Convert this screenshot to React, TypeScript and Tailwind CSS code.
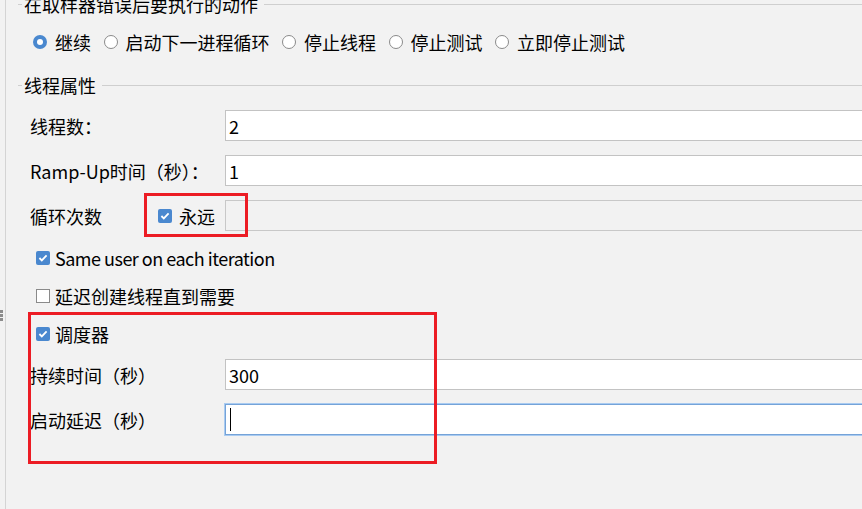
import React from "react";

function Radio({ checked }: { checked?: boolean }) {
  if (checked) {
    return (
      <span className="w-[14px] h-[14px] rounded-full bg-[#4a88cf] flex items-center justify-center shrink-0">
        <span className="w-[6px] h-[6px] rounded-full bg-white" />
      </span>
    );
  }
  return <span className="w-[14px] h-[14px] rounded-full bg-white border border-[#8a8a8a] shrink-0" />;
}

function Check({ checked }: { checked?: boolean }) {
  if (checked) {
    return (
      <span className="w-[14px] h-[14px] rounded-[2px] bg-[#4a88cf] flex items-center justify-center shrink-0">
        <svg width="12" height="12" viewBox="0 0 12 12">
          <path d="M2.4 6 L4.8 8.4 L9.6 3.4" fill="none" stroke="white" strokeWidth="1.8" />
        </svg>
      </span>
    );
  }
  return <span className="w-[14px] h-[14px] bg-white border border-[#8a8a8a] shrink-0" />;
}

function Title({ text, cls }: { text: string; cls: string }) {
  return (
    <div className={"h-[24px] flex items-center " + cls}>
      <span className="ml-[12px] w-[4px] h-px bg-[#cfcfcf]" />
      <span className="ml-[2px] whitespace-nowrap">{text}</span>
      <span className="ml-[6px] flex-1 h-px bg-[#cfcfcf]" />
    </div>
  );
}

function Field({ label, value, cls }: { label: string; value: string; cls: string }) {
  return (
    <div className={"h-[31px] flex items-center " + cls}>
      <span className="w-[195px] shrink-0 whitespace-nowrap">{label}</span>
      <div className="flex-1 mr-[-6px] h-full bg-white border border-[#c3c3c3] pl-[3px] flex items-center">{value}</div>
    </div>
  );
}

function CheckRow({ checked, label, cls, tcls }: { checked?: boolean; label: string; cls: string; tcls?: string }) {
  return (
    <div className={"h-[25px] flex items-center pl-[6px] " + cls}>
      <Check checked={checked} />
      <span className={"ml-[5px] whitespace-nowrap " + (tcls || "")}>{label}</span>
    </div>
  );
}

export default function App() {
  const radios = ["继续", "启动下一进程循环", "停止线程", "停止测试", "立即停止测试"];
  return (
    <div className="relative w-[862px] h-[509px] overflow-hidden bg-[#f2f2f2] flex text-[18px] leading-[24px] text-black font-['Noto_Sans_CJK_SC',sans-serif]">
      <div className="w-[6px] shrink-0 border-r border-[#d4d4d4] flex flex-col pt-[310px] gap-[1px]">
        <span className="w-[3px] h-[3px] bg-[#8c8c8c]" />
        <span className="w-[3px] h-[3px] bg-[#8c8c8c]" />
        <span className="w-[3px] h-[3px] bg-[#8c8c8c]" />
      </div>
      <div className="flex-1 flex flex-col min-w-0">
        <Title text="在取样器错误后要执行的动作" cls="mt-[-8px]" />
        <div className="h-[52px] flex items-center pl-[27px] gap-[12.5px]">
          {radios.map((r, i) => (
            <div key={r} className="flex items-center gap-[8px]">
              <Radio checked={i === 0} />
              <span className="whitespace-nowrap">{r}</span>
            </div>
          ))}
        </div>
        <Title text="线程属性" cls="mt-[5px]" />
        <div className="mt-[13px] flex flex-col pl-[24px]">
          <Field label="线程数：" value="2" cls="" />
          <Field label="Ramp-Up时间（秒）：" value="1" cls="mt-[14px]" />
          <div className="h-[31px] mt-[14px] flex items-center">
            <div className="w-[195px] shrink-0 flex items-center">
              <span className="w-[128px] shrink-0 whitespace-nowrap">循环次数</span>
              <Check checked />
              <span className="ml-[7px] whitespace-nowrap">永远</span>
            </div>
            <div className="flex-1 mr-[-6px] h-full border border-[#c8c8c8] bg-[#f2f2f2]" />
          </div>
          <CheckRow checked label="Same user on each iteration" cls="mt-[14px]" tcls="tracking-[-0.5px]" />
          <CheckRow label="延迟创建线程直到需要" cls="mt-[13px]" />
          <CheckRow checked label="调度器" cls="mt-[13px]" />
          <Field label="持续时间（秒）" value="300" cls="mt-[13px]" />
          <div className="h-[31px] mt-[14px] flex items-center">
            <span className="w-[195px] shrink-0 whitespace-nowrap">启动延迟（秒）</span>
            <div className="flex-1 mr-[-6px] h-full bg-white border border-[#75a3d8] shadow-[0_0_0_1px_#a9cbf1] pl-[4px] flex items-center">
              <span className="w-px h-[23px] bg-black" />
            </div>
          </div>
        </div>
      </div>
      <div className="absolute left-[144px] top-[193px] w-[104px] h-[44px] border-[3px] border-[#ec1c24]" />
      <div className="absolute left-[28px] top-[312px] w-[409px] h-[152px] border-[3px] border-[#ec1c24]" />
    </div>
  );
}
